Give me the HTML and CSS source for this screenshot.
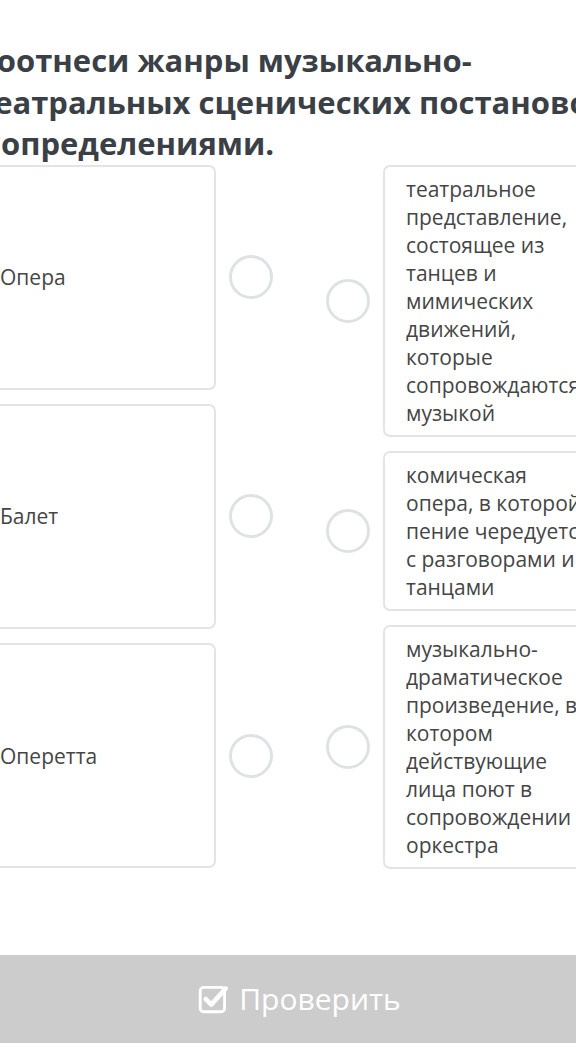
FILE: index.html
```html
<!DOCTYPE html>
<html lang="ru">
<head>
<meta charset="utf-8">
<link rel="stylesheet" href="styles.css">
</head>
<body>
<div class="page">
  <h1 class="title">Соотнеси жанры музыкально-<br>театральных сценических постановок<br>с определениями.</h1>
  <div class="match">
    <div class="col col-left">
      <div class="item item-left"><div class="card">Опера</div><span class="dot"></span></div>
      <div class="item item-left"><div class="card">Балет</div><span class="dot"></span></div>
      <div class="item item-left"><div class="card">Оперетта</div><span class="dot"></span></div>
    </div>
    <div class="col col-right">
      <div class="item item-right"><span class="dot"></span><div class="card">театральное представление, состоящее из танцев и мимических движений, которые сопровождаются музыкой</div></div>
      <div class="item item-right"><span class="dot"></span><div class="card">комическая опера, в которой пение чередуется с разговорами и танцами</div></div>
      <div class="item item-right"><span class="dot"></span><div class="card">музыкально-драматическое произведение, в котором действующие лица поют в сопровождении оркестра</div></div>
    </div>
  </div>
  <button class="check">
    <svg class="check-icon" viewBox="0 0 28 28" width="31" height="31" aria-hidden="true">
      <rect x="2" y="4" width="22" height="22" rx="3" fill="none" stroke="#fff" stroke-width="2.6"/>
      <path d="M7 14.5 L12 19.5 L25 5" fill="none" stroke="#fff" stroke-width="4.2" stroke-linecap="round" stroke-linejoin="round"/>
    </svg>
    <span>Проверить</span>
  </button>
</div>
</body>
</html>
```
FILE: styles.css
```css
html, body {
  margin: 0;
  padding: 0;
  background: #fff;
  overflow: hidden;
}
body {
  font-family: "Open Sans", "Noto Sans", sans-serif;
  color: #444;
}
.page {
  width: 645px;
  margin-left: -23px;
  padding-top: 40px;
}
.title {
  margin: 0;
  font-size: 31px;
  line-height: 41.5px;
  font-weight: 700;
  color: #3b3f46;
  white-space: nowrap;
}
.match {
  display: flex;
  align-items: stretch;
}
.col {
  display: flex;
  flex-direction: column;
  gap: 14px;
}
.col-left {
  width: 296px;
}
.col-right {
  flex: 1;
}
.item {
  display: flex;
  align-items: center;
}
.item-left {
  flex: 1;
}
.item-left .card {
  align-self: stretch;
  width: 239px;
  box-sizing: border-box;
  display: flex;
  align-items: center;
}
.card {
  border: 2px solid #e4e4e4;
  border-radius: 7px;
  padding: 8px 22px 8px 21px;
  font-size: 21px;
  line-height: 28px;
  color: #454545;
  background: #fff;
}
.item-right .card {
  flex: 1;
  padding-right: 28px;
}
.dot {
  width: 38px;
  height: 38px;
  border: 3px solid #dfe2e5;
  border-radius: 50%;
  flex: none;
}
.item-left .dot {
  margin-left: 13px;
}
.item-right .dot {
  margin-left: 53px;
  margin-right: 13px;
}
.check {
  margin-top: 86px;
  width: 100%;
  height: 88px;
  border: none;
  border-radius: 6px;
  background: #cccccc;
  color: #fff;
  font-family: "Open Sans", sans-serif;
  font-size: 30px;
  display: flex;
  align-items: center;
  justify-content: center;
  gap: 10px;
  padding: 0;
}
.check-icon {
  display: block;
}
```
